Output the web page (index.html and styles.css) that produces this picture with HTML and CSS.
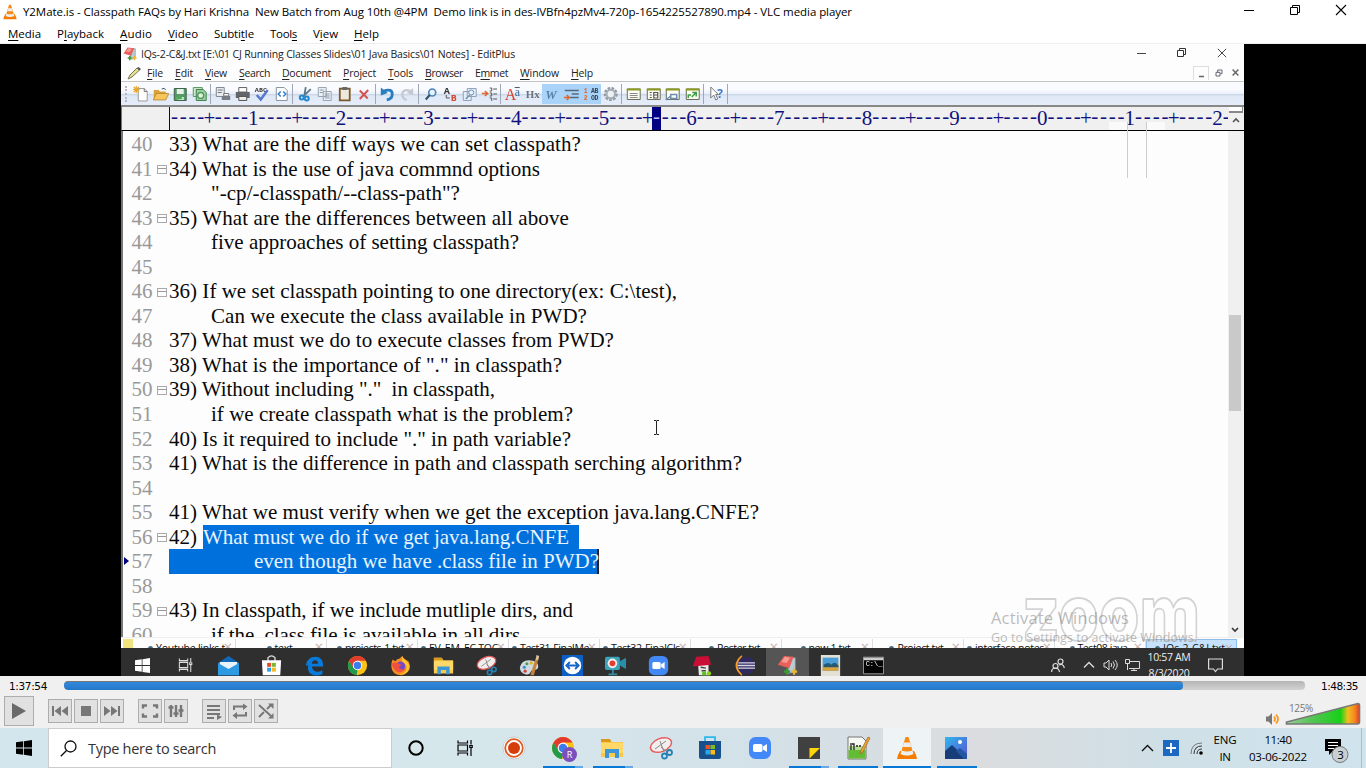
FILE: index.html
```html
<!DOCTYPE html>
<html lang="en">
<head>
<meta charset="utf-8">
<title>VLC media player</title>
<link rel="stylesheet" href="styles.css">
</head>
<body>
<svg class="defs" width="0" height="0">
  <defs>
    <linearGradient id="vol"><stop offset="0" stop-color="#9c9"/><stop offset=".35" stop-color="#55c455"/><stop offset=".74" stop-color="#18d018"/><stop offset=".84" stop-color="#f0c020"/><stop offset=".93" stop-color="#f58a20"/><stop offset="1" stop-color="#f03a1c"/></linearGradient>
    <linearGradient id="photo" x2="1" y2="1"><stop offset="0" stop-color="#30b8ee"/><stop offset="1" stop-color="#5b4fd0"/></linearGradient>
    <symbol id="cone" viewBox="0 0 24 24"><path d="M3 19l2-4h14l2 4 1 4H2z" fill="#f57c00"/><path d="M10.500 1h3l5 17q-6.500 3-13 0z" fill="#f78a12"/><path d="M9 6.500h6l1.300 4.500H7.700zM6.500 14.500q5.500 2 11 0l1 3.500q-6.500 3-13 0z" fill="#eceff1"/></symbol>
    <symbol id="chrome" viewBox="0 0 24 24"><circle cx="12" cy="12" r="11" fill="#fbc116"/><path d="M2.500 6.500A11 11 0 0 1 21.500 6.500H12L7 15z" fill="#e33b2e"/><path d="M2.500 6.500L7.500 15 12 17.500 11 23A11 11 0 0 1 2.500 6.500z" fill="#229a4b"/><circle cx="12" cy="12" r="5.400" fill="#fff"/><circle cx="12" cy="12" r="4.300" fill="#3b7ded"/></symbol>
    <symbol id="folder" viewBox="0 0 24 24"><path d="M1 3h9l2 3h11v15H1z" fill="#f8c94b"/><path d="M1 3h9l1 3H1z" fill="#d99a1c"/><path d="M1 7h22v10H1z" fill="#ffd868"/><path d="M5 22v-9h14v9h-4v-5H9v5z" fill="#3b97d8"/></symbol>
    <symbol id="snip" viewBox="0 0 24 24"><ellipse cx="12" cy="9" rx="11" ry="6.500" transform="rotate(-22 12 9)" fill="#f3eeee" stroke="#e55c5c" stroke-width="1.400"/><path d="M6 13L17 5M11 5l4 11M12 11l6 5" stroke="#888" fill="none"/><g fill="none" stroke="#2482b5" stroke-width="1.800"><circle cx="15.500" cy="20" r="2.500"/><circle cx="20.500" cy="16.500" r="2.500"/></g></symbol>
    <symbol id="zoomcam" viewBox="0 0 24 24"><rect x="1" y="1" width="22" height="22" rx="6.500" fill="#4388f7"/><rect x="5" y="8" width="9.500" height="8" rx="1.800" fill="#fff"/><path d="M15 10.500l4-2.500v8l-4-2.500z" fill="#fff"/></symbol>
    <symbol id="win" viewBox="0 0 16 16"><path d="M0 2.300L7.200 1.300v6.200H0zM8 1.200L16 0v7.500H8zM0 8.400h7.200v6.300L0 13.700zM8 8.400h8V16l-8-1.200z" fill="currentColor"/></symbol>
    <symbol id="taskview" viewBox="0 0 16 16"><path d="M1 .500V3h9.500V.500M1 15.500V13h9.500v2.500M1 5h9.500v6H1zM14 0v4.500M14 8v8M12.800 5.500h2.400v2h-2.400z" fill="none" stroke="currentColor" stroke-width="1.200"/></symbol>
    <symbol id="sheet" viewBox="0 0 16 16"><path d="M1.500 3h13v10.500h-13z" fill="#fdfdf4" stroke="#666b58"/><path d="M1 2.500h14v2H1z" fill="#8c9a1d"/></symbol>
    <symbol id="restore" viewBox="0 0 12 12"><path d="M1.500 3.500h7v7h-7zM3.500 3.500v-2h7v7h-2" fill="none" stroke="currentColor"/></symbol>
    <symbol id="close" viewBox="0 0 12 12"><path d="M1 1l10 10M11 1L1 11" stroke="currentColor" stroke-width="1.100"/></symbol>
    <symbol id="editplus" viewBox="0 0 24 24"><path d="M12 3l9 0v16l-8 2z" fill="#b9ccd4" stroke="#6d8790"/><path d="M8 1l11 1-5 13-13-4z" fill="#e8605a"/><path d="M9 2l6 1-4 6-6-1z" fill="#f79b94"/><path d="M8 19h7M11.500 15.500v7" stroke="#3c9a3a" stroke-width="2.600"/><path d="M16 19h7M19.500 15.500v7" stroke="#e8b93a" stroke-width="2.600"/></symbol>
  </defs>
</svg>

<header class="titlebar">
  <svg class="s16"><use href="#cone"/></svg>
  <span class="title" data-w="829">Y2Mate.is - Classpath FAQs by Hari Krishna&nbsp; New Batch from Aug 10th @4PM&nbsp; Demo link is in des-lVBfn4pzMv4-720p-1654225527890.mp4 - VLC media player</span>
  <span class="winbtns"><svg width="12" height="12"><path d="M1 6.500h10" stroke="#000"/></svg><svg class="s12"><use href="#restore"/></svg><svg class="s12"><use href="#close"/></svg></span>
</header>
<nav class="menubar">
  <span data-w="33"><u>M</u>edia</span><span data-w="47">P<u>l</u>ayback</span><span data-w="32"><u>A</u>udio</span><span data-w="30"><u>V</u>ideo</span><span data-w="40">Subti<u>t</u>le</span><span data-w="27">Tool<u>s</u></span><span data-w="25">V<u>i</u>ew</span><span data-w="25"><u>H</u>elp</span>
</nav>

<main class="video">
<div class="frame">
  <div class="ep-title">
    <svg class="s13"><use href="#editplus"/></svg>
    <span data-w="374">IQs-2-C&amp;J.txt [E:\01 CJ Running Classes Slides\01 Java Basics\01 Notes] - EditPlus</span>
    <span class="ep-win"><svg width="10" height="10"><path d="M0 5.500h9" stroke="#444"/></svg><svg width="10" height="10" viewBox="0 0 10 10"><path d="M.500 2.500h6v6h-6zM2.500 2.500v-2h6v6h-2" fill="none" stroke="#333"/></svg><svg width="10" height="10"><use href="#close"/></svg></span>
  </div>
  <div class="ep-menu">
    <svg width="14" height="14" viewBox="0 0 14 14"><path d="M1 13l2-4 7-7 2.500 2L5 11z" fill="#e8e08a" stroke="#77745a"/><path d="M10 2l1.500-1L14 3l-1.500 1.500z" fill="#555"/></svg>
    <span data-w="16"><u>F</u>ile</span><span data-w="18"><u>E</u>dit</span><span data-w="22"><u>V</u>iew</span><span data-w="31"><u>S</u>earch</span><span data-w="49"><u>D</u>ocument</span><span data-w="33"><u>P</u>roject</span><span data-w="25"><u>T</u>ools</span><span data-w="38"><u>B</u>rowser</span><span data-w="33">E<u>m</u>met</span><span data-w="39"><u>W</u>indow</span><span data-w="22"><u>H</u>elp</span>
    <span class="mdi"><svg width="16" height="14"><path d="M5 9.500h5" stroke="#666" stroke-width="1.500"/></svg><svg width="8" height="8" viewBox="0 0 12 12"><path d="M1.500 5h6v5.500h-6zM4 5V1.500h6.500V7H8" fill="none" stroke="#667" stroke-width="1.500"/></svg><svg width="7" height="7" viewBox="0 0 12 12"><path d="M1 1l10 10M11 1L1 11" stroke="#666" stroke-width="2.500"/></svg></span>
  </div>
  <div class="tools">
    <i class="grip"></i>
    <svg viewBox="0 0 16 16"><path d="M5.500 2.500h6l3 3v9.500h-9z" fill="#fff" stroke="#999"/><path d="M11.500 2.500v3h3" fill="none" stroke="#777"/><path d="M3.500 0v7M0 3.500h7M1 1l5 5M6 1L1 6" stroke="#e7a72c" stroke-width="1.200"/></svg>
    <svg viewBox="0 0 16 16"><path d="M1 4h5l1 1.500h6V13H1z" fill="#dba13a"/><path d="M3.500 7.500H16L13 14H.500z" fill="#f6c65c" stroke="#ad7b21" stroke-width=".7"/><path d="M9 3q3-2 4 1" fill="none" stroke="#456"/></svg>
    <svg viewBox="0 0 16 16"><path d="M2.500 2.500h12v12h-12z" fill="#58966a" stroke="#3a6248"/><path d="M5 3h7v5H5zM5 11h7v3H5z" fill="#e4f2e5"/><path d="M3 14l5-6 3 5z" fill="#4aab55"/></svg>
    <svg viewBox="0 0 16 16"><path d="M1.500 1.500h9v9h-9z" fill="#cce8cc" stroke="#589a68"/><path d="M4.500 3.500h7l3 3v8h-10z" fill="#9fd0a5" stroke="#40804c"/><circle cx="9" cy="9.500" r="3" fill="#dff2df" stroke="#4b9857" stroke-width="1.300"/></svg>
    <i class="sep"></i>
    <svg viewBox="0 0 16 16"><path d="M1.500 1.500h8v9h-8z" fill="#e9edf2" stroke="#7e8794"/><path d="M3 4h5M3 6.500h4" stroke="#777"/><path d="M7 10h8.500v4H7z" fill="#777d86"/><path d="M9 7.500h5V10H9z" fill="#fff" stroke="#777"/></svg>
    <svg viewBox="0 0 16 16"><path d="M4 1.500h8V6H4z" fill="#fff" stroke="#666"/><path d="M1 6h14v6H1z" fill="#62656b"/><path d="M4 10.500h8v4H4z" fill="#eee" stroke="#555"/></svg>
    <svg viewBox="0 0 16 16"><text x="1" y="6" class="t-abc">ABC</text><path d="M3 9l4 4.500L14 4" fill="none" stroke="#5577cc" stroke-width="2.500"/></svg>
    <svg viewBox="0 0 16 16"><path d="M2.500 1.500h8l3 3v10h-11z" fill="#fff" stroke="#8793a0"/><path d="M7 5.500L4.500 8 7 10.500M9.500 5.500L12 8l-2.500 2.500" fill="none" stroke="#387fd4" stroke-width="1.600"/></svg>
    <i class="sep"></i>
    <svg viewBox="0 0 16 16"><path d="M8 1L6.500 10M13 3L5 11" stroke="#5c7787" stroke-width="1.800"/><g fill="none" stroke="#2389ce" stroke-width="2"><circle cx="4" cy="11.500" r="2"/><circle cx="9" cy="12.500" r="2"/></g></svg>
    <svg viewBox="0 0 16 16"><path d="M1.500 1.500h8v9h-8zM6.500 5.500h8v9h-8z" fill="#edf2f7" stroke="#97a3b0"/><path d="M3 4h4M3 6.500h3M8 8h5M8 10h5M8 12h5" stroke="#8996a5"/></svg>
    <svg viewBox="0 0 16 16"><path d="M3 2.500h10v12H3z" fill="#efe9dc" stroke="#7a5a2a" stroke-width="1.800"/><path d="M5.500 1h5v3h-5z" fill="#666"/></svg>
    <svg viewBox="0 0 16 16"><path d="M4 4.500l8 8M12.500 4L4 13" stroke="#d35450" stroke-width="2"/></svg>
    <i class="sep"></i>
    <svg viewBox="0 0 16 16"><path d="M3 5.500q10-4 9.500 3.500-.5 4-5.500 5" fill="none" stroke="#287dbe" stroke-width="2.800"/><path d="M1 1.500v8l7-2.500z" fill="#287dbe"/></svg>
    <svg viewBox="0 0 16 16"><path d="M12.500 5.500q-9-4-9 3.500.5 4 4.500 5" fill="none" stroke="#c4c9d0" stroke-width="2.200"/><path d="M14.500 2v7L8 7z" fill="#c4c9d0"/></svg>
    <i class="sep"></i>
    <svg viewBox="0 0 16 16"><circle cx="9.500" cy="6.500" r="3.500" fill="#e8f3fd" stroke="#4f83bd" stroke-width="1.700"/><path d="M7 9l-4 4.500" stroke="#35536f" stroke-width="2.200"/></svg>
    <svg viewBox="0 0 16 16"><text x="1" y="8" class="t-a">A</text><text x="8" y="15" class="t-a t-red">B</text><path d="M3.500 9v3h3.500" fill="none" stroke="#555"/></svg>
    <svg viewBox="0 0 16 16"><path d="M5.500 2.500h9v8h-9zM1.500 5.500h8v9h-8z" fill="#e5edf6" stroke="#8fa0b5"/><circle cx="9.500" cy="6.500" r="2.500" fill="#e8f3fd" stroke="#6d91bc"/><path d="M8 9l-4 4" stroke="#6d91bc" stroke-width="1.500"/></svg>
    <svg viewBox="0 0 16 16"><path d="M0 7.500h5M3 5l3 2.500L3 10" fill="none" stroke="#e2652a" stroke-width="1.500"/><path d="M8 2h2v3H8M8 7h2v3H8M8 12h2v3M11.500 3H16M11.500 8H16M11.500 13H16" stroke="#555" fill="none"/></svg>
    <i class="sep"></i>
    <svg viewBox="0 0 16 16"><text x="0" y="14" class="t-serif t-red">A</text><text x="10" y="9.500" class="t-blue">a</text><path d="M10 1.500h5" stroke="#456"/></svg>
    <svg viewBox="0 0 16 16"><text x="1" y="12.500" class="t-hx">Hx</text></svg>
    <svg class="on" viewBox="0 0 16 16"><text x="1.500" y="13" class="t-w">W</text></svg>
    <svg class="on" viewBox="0 0 16 16"><path d="M1 4.500h14M8 8h7M6 11.500h9" stroke="#566777" stroke-width="1.500"/><path d="M0 11.500h5M3 9l2.500 2.500L3 14" fill="none" stroke="#e2652a" stroke-width="1.500"/></svg>
    <svg class="on" viewBox="0 0 16 16"><text x="1" y="7" class="t-num"><tspan fill="#e06522">1</tspan> AB</text><text x="1" y="14" class="t-num"><tspan fill="#e06522">2</tspan> OD</text></svg>
    <svg viewBox="0 0 16 16"><circle cx="8" cy="8" r="5.500" fill="none" stroke="#9199a2" stroke-width="3" stroke-dasharray="2.500 1.200"/><circle cx="8" cy="8" r="4.200" fill="#edf0f4" stroke="#a6adb5" stroke-width="2"/></svg>
    <i class="sep"></i>
    <svg viewBox="0 0 16 16"><use href="#sheet"/><path d="M4 7.500h8M4 9.500h8M4 11.500h8" stroke="#888"/></svg>
    <svg viewBox="0 0 16 16"><use href="#sheet"/><path d="M4 6.500h2M4 9h2M4 11.500h2M8 6.500h4v5.500H8zM8 9h4" fill="none" stroke="#555" stroke-width="1.200"/></svg>
    <svg viewBox="0 0 16 16"><use href="#sheet"/><path d="M1 14l5-4M6 8.500h6v4H6z" fill="none" stroke="#6d8db5" stroke-width="1.500"/></svg>
    <svg viewBox="0 0 16 16"><use href="#sheet"/><path d="M3.500 12V9h3M7 11l4-4M7.500 6.500h4v4" fill="none" stroke="#3c9e43" stroke-width="1.500"/></svg>
    <i class="sep"></i>
    <svg viewBox="0 0 16 16"><path d="M2 1v11l3-3 2 5 2-1-2-4.500h2.500z" fill="#fff" stroke="#777"/><text x="8.500" y="12.500" class="t-q">?</text></svg>
    <i class="sep"></i>
  </div>
  <div class="ruler"><div class="ruler-gap"></div><div class="cells" id="cells"></div><div class="ruler-end"><i></i><svg width="8" height="6"><path d="M1 5l3-3 3 3" fill="none" stroke="#555" stroke-width="1.600"/></svg></div></div>
  <div class="editor">
    <div class="lines">
      <div class="ln"><b>40</b><i></i><span data-w="412">33) What are the diff ways we can set classpath?</span></div>
      <div class="ln"><b>41</b><i class="fold"></i><span data-w="371">34) What is the use of java commnd options</span></div>
      <div class="ln in"><b>42</b><i></i><span data-w="249">"-cp/-classpath/--class-path"?</span></div>
      <div class="ln"><b>43</b><i class="fold"></i><span data-w="400">35) What are the differences between all above</span></div>
      <div class="ln in"><b>44</b><i></i><span data-w="308">five approaches of setting classpath?</span></div>
      <div class="ln"><b>45</b></div>
      <div class="ln"><b>46</b><i class="fold"></i><span data-w="508">36) If we set classpath pointing to one directory(ex: C:\test),</span></div>
      <div class="ln in"><b>47</b><i></i><span data-w="376">Can we execute the class available in PWD?</span></div>
      <div class="ln"><b>48</b><i></i><span data-w="445">37) What must we do to execute classes from PWD?</span></div>
      <div class="ln"><b>49</b><i></i><span data-w="393">38) What is the importance of "." in classpath?</span></div>
      <div class="ln"><b>50</b><i class="fold"></i><span data-w="326">39) Without including "."&nbsp; in classpath,</span></div>
      <div class="ln in"><b>51</b><i></i><span data-w="362">if we create classpath what is the problem?</span></div>
      <div class="ln"><b>52</b><i></i><span data-w="402">40) Is it required to include "." in path variable?</span></div>
      <div class="ln"><b>53</b><i></i><span data-w="573">41) What is the difference in path and classpath serching algorithm?</span></div>
      <div class="ln"><b>54</b></div>
      <div class="ln"><b>55</b><i></i><span data-w="590">41) What we must verify when we get the exception java.lang.CNFE?</span></div>
      <div class="ln"><b>56</b><i class="fold"></i><span class="pre" data-w="28">42)</span><span class="sel s1"><span data-w="366">What must we do if we get java.lang.CNFE</span></span></div>
      <div class="ln now"><b>57</b><i></i><span class="sel s2"><span data-w="345">even though we have .class file in PWD?</span></span></div>
      <div class="ln"><b>58</b></div>
      <div class="ln"><b>59</b><i class="fold"></i><span data-w="404">43) In classpath, if we include mutliple dirs, and</span></div>
      <div class="ln in"><b>60</b><i></i><span data-w="309">if the .class file is available in all dirs</span></div>
    </div>
    <div class="scroll"><div class="thumb"></div><svg width="8" height="6"><path d="M1 1l3 3 3-3" fill="none" stroke="#333" stroke-width="1.600"/></svg></div>
  </div>
  <div class="tabs">
    <i class="tabnew"></i>
    <span><em></em><b data-w="69">Youtube links t</b><s>×</s></span><span><em></em><b data-w="18">text</b><s>×</s></span><span><em></em><b data-w="59">projects-1.txt</b><s>×</s></span><span><em></em><b data-w="69">EV_EM_EC TOC</b><s>×</s></span><span><em></em><b data-w="69">Test31-FinalMe</b><s>×</s></span><span><em></em><b data-w="69">Test32-FinalCls</b><s>×</s></span><span><em></em><b data-w="43">Poster.txt</b><s>×</s></span><span><em></em><b data-w="42">new 1.txt</b><s>×</s></span><span><em></em><b data-w="46">Project.txt</b><s>×</s></span><span><em></em><b data-w="69">interface notes</b><s>×</s></span><span><em></em><b data-w="50">Test08.java</b><s>×</s></span><span class="cur"><em></em><b data-w="62">IQs-2-C&amp;J.txt</b><s>×</s></span>
  </div>
  <div class="innerbar">
    <div class="slot"><svg width="15" height="15" color="#fff"><use href="#win"/></svg></div>
    <div class="slot"><svg width="15" height="14" color="#ddd"><use href="#taskview"/></svg></div>
    <div class="slot"><svg viewBox="0 0 24 24"><path d="M0 9L12 1l12 8v14H0z" fill="#1168b8"/><path d="M2 8h20v8H2z" fill="#e9f4fc"/><path d="M0 9l12 7 12-7v14H0z" fill="#2d9ae2"/></svg></div>
    <div class="slot"><svg viewBox="0 0 24 24"><path d="M8 7V3q4-4 8 0v4" fill="none" stroke="#ddd" stroke-width="1.500"/><path d="M1 6h22l-1 17H2z" fill="#fff"/><path d="M7 9h4.500v4.500H7z" fill="#ea4b2a"/><path d="M12.500 9H17v4.500h-4.500z" fill="#7cb82f"/><path d="M7 14.500h4.500V19H7z" fill="#2a9fe5"/><path d="M12.500 14.500H17V19h-4.500z" fill="#f7b71d"/></svg></div>
    <div class="slot"><svg viewBox="0 0 24 24"><path d="M2 12Q4 2 13 2q9 0 9 11H9q1 6 7 6 3 0 5-1.500V22q-10 3.500-15-2-3-5 0-11 1 1-1 3zM9 10h7q0-4-3.500-4Q9.500 6 9 10z" fill="#087ada"/></svg></div>
    <div class="slot"><svg><use href="#chrome"/></svg></div>
    <div class="slot"><svg viewBox="0 0 24 24"><path d="M3 5l3 2q2-3 5-3l3-3q1 3 5 5l2 1q3 5 1 10-4 6-10 6-10-1-10.500-10Q1.500 8 3 5z" fill="#f88c22"/><path d="M14 1q1 4 5 6 5 5 1 12-5 4-9 3 7-1 8-7 0-5-5-7z" fill="#fdca2c"/><circle cx="12" cy="13" r="5.500" fill="#7b48c4"/><path d="M2 10q4-3 8 0l3 1-3 3q3 4 7 2-3 5-9 3-5-3-6-9z" fill="#f0523f"/></svg></div>
    <div class="slot"><svg><use href="#folder"/></svg></div>
    <div class="slot"><svg><use href="#snip"/></svg></div>
    <div class="slot"><svg viewBox="0 0 24 24"><path d="M1 14Q3 6 11 6q11 0 11 7 0 4-6 4-2 0-3 3t-6 2q-6-2-6-8z" fill="#cfdae0"/><circle cx="6" cy="14" r="1.800" fill="#3a8ed0"/><circle cx="9" cy="10" r="1.800" fill="#49a04a"/><circle cx="14" cy="9" r="1.800" fill="#ddb421"/><circle cx="7" cy="18.500" r="1.800" fill="#cc4439"/><path d="M13 23L19 4l3 1-5 18z" fill="#c98238"/><path d="M19 5l1-5 3 1-1 5z" fill="#ddc39b"/></svg></div>
    <div class="slot"><svg viewBox="0 0 24 24"><path d="M0 0h24v24H0z" fill="#0c5fc4"/><circle cx="12" cy="12" r="10" fill="#fff"/><path d="M7 12h10M9 8l-4 4 4 4M15 8l4 4-4 4" fill="none" stroke="#1565c8" stroke-width="2.200"/></svg></div>
    <div class="slot"><svg viewBox="0 0 24 24"><rect x="0" y="2" width="17" height="15" rx="2" fill="#3ba2ba"/><path d="M17 7l7-4v13l-7-4z" fill="#278faa"/><circle cx="8.500" cy="9.500" r="5.500" fill="#f4eeee"/><circle cx="8.500" cy="9.500" r="3.300" fill="#e33c33"/><path d="M9 17v4M4 22h10" stroke="#338da0" stroke-width="2"/></svg></div>
    <div class="slot"><svg><use href="#zoomcam"/></svg></div>
    <div class="slot"><svg viewBox="0 0 24 24"><path d="M8 9h12v14H9z" fill="#ece8e8"/><path d="M6 2l14-1 3 10-21 2z" fill="#c90f36"/><path d="M11 14l6 1M12 18h5" stroke="#444" stroke-width="1.500"/><circle cx="15" cy="21" r="2.500" fill="#55c51a"/><circle cx="20.500" cy="21" r="2.500" fill="#8fd019"/></svg></div>
    <div class="slot"><svg viewBox="0 0 24 24"><path d="M9 1Q-4 12 9 23-1 12 9 1z" fill="#f39a28" stroke="#f39a28" stroke-width="1.500"/><circle cx="14" cy="12" r="10" fill="#30295e"/><path d="M5 9h19M4 12h20M5 15h19" stroke="#d6d5e5" stroke-width="1.700"/></svg></div>
    <div class="slot active"><svg><use href="#editplus"/></svg></div>
    <div class="slot"><svg viewBox="0 0 24 24"><path d="M1 0h22v24H1z" fill="#e3e0d6"/><path d="M3 3h18v15H3z" fill="#4b9fd8"/><path d="M3 13q6-6 10-1l8-2v8H3z" fill="#dda33b"/><path d="M4 11q6-4 9 0 4-5 8 1v2H4z" fill="#245a73"/></svg></div>
    <div class="slot"><svg viewBox="0 0 24 24"><path d="M.500 2.500h23v19H.500z" fill="#050505" stroke="#aaa"/><path d="M1 3h22v3H1z" fill="#ccc"/><text x="3" y="13" class="t-cmd">C:\_</text></svg></div>
    <div class="inner-tray">
      <svg class="people" width="14" height="15" viewBox="0 0 14 15"><g fill="none" stroke="#ddd" stroke-width="1.200"><circle cx="9.500" cy="3.500" r="2.500"/><circle cx="4.500" cy="8" r="2.500"/><path d="M.600 14q0-4 4-4 3 0 4 4M8 7q4-2 5.400 3"/></g></svg>
      <svg class="up" width="12" height="8"><path d="M1 6.500L6 1.500l5 5" fill="none" stroke="#ddd" stroke-width="1.300"/></svg>
      <svg class="spk" width="15" height="12" viewBox="0 0 15 12"><path d="M1 4h2l3-3v10L3 8H1zM8 4q1.500 2 0 4M10 2.500q3 3.500 0 7M12 1q4.500 5 0 10" fill="none" stroke="#ddd"/></svg>
      <svg class="mon" width="15" height="12" viewBox="0 0 15 12"><path d="M4 2.500h10.500v7H4M9 9.500V12M6 11.500h6M.500.500h4v4h-4zM2.500 4.500V11" fill="none" stroke="#ddd"/></svg>
      <div class="inner-clock"><span data-w="43">10:57 AM</span><span data-w="41">8/3/2020</span></div>
      <svg class="note" width="15" height="15" viewBox="0 0 15 15"><path d="M.600 1h13.800v10H9.500L7.500 13.500 5.500 11H.600z" fill="none" stroke="#ddd" stroke-width="1.200"/></svg>
    </div>
  </div>

  <svg class="zoommark" width="190" height="56"><text x="5" y="47" textLength="178" lengthAdjust="spacingAndGlyphs">zoom</text></svg>
  <div class="activate"><span data-w="138">Activate Windows</span><small data-w="206">Go to Settings to activate Windows.</small></div>
  <div class="ghost"></div>
  <svg class="ibeam" width="7" height="15"><path d="M1 .500h2l.5.500.5-.5h2M3.500 1v13M1 14.500h2l.5-.5.5.5h2" fill="none" stroke="#222"/></svg>
</div>
</main>

<section class="player">
  <div class="seekrow"><span data-w="38">1:37:54</span><div class="seek"><div class="played"></div></div><span data-w="37">1:48:35</span></div>
  <div class="btnrow">
    <button class="big"><svg width="16" height="18"><path d="M1 1l14 8L1 17z" fill="#6a6a6a"/></svg></button>
    <div class="grp">
      <button><svg viewBox="0 0 18 18"><path d="M1 4h2v10H1zM10 4v10L3.500 9zM17 4v10l-6.500-5z"/></svg></button><button><svg viewBox="0 0 18 18"><path d="M4 4h10v10H4z"/></svg></button><button><svg viewBox="0 0 18 18"><path d="M15 4h2v10h-2zM8 4v10l6.500-5zM1 4v10l6.500-5z"/></svg></button>
    </div>
    <div class="grp">
      <button><svg viewBox="0 0 18 18"><path d="M2 6.500V3.500h4M12 3.500h4v3M16 11.500v3h-4M6 14.500H2v-3" class="k"/></svg></button><button><svg viewBox="0 0 18 18"><path d="M4 3v12M9 3v12M14 3v12" class="k"/><path d="M1.500 5.500h5M6.500 11.500h5M11.500 8.500h5" class="k"/></svg></button>
    </div>
    <div class="grp">
      <button><svg viewBox="0 0 18 18"><path d="M2 4h13M2 8h13M2 12h13M2 16h7" class="k thin"/><path d="M12 12.500l5 2.500-5 3z"/></svg></button><button><svg viewBox="0 0 18 18"><path d="M3 8V4.500h10M15 10v3.500H5" class="k thin"/><path d="M12 1.500l4.500 3L12 8zM6 10l-4.500 3.500L6 17z"/></svg></button><button><svg viewBox="0 0 18 18"><path d="M2 3l12 11M2 15l5-5M10 7l4-4" class="k thin"/><path d="M11 1.500h5.500V7zM11 16.500h5.500V11z"/></svg></button>
    </div>
    <div class="volume">
      <svg width="14" height="14" viewBox="0 0 14 14"><path d="M0 4.500h2.500L6 1v12L2.500 9.500H0z" fill="#777"/><path d="M8 4.500q2 2.500 0 5M10 2.500q4 4.500 0 9" fill="none" stroke="#f89a26" stroke-width="1.800"/></svg>
      <span data-w="24">125%</span>
      <svg class="wedge" width="76" height="24"><path d="M1.500 22v-2L73 1.500q1.500 0 1.500 2V20q0 2-2 2z" fill="url(#vol)" stroke="#777" stroke-width="1.600"/></svg>
    </div>
  </div>
</section>

<footer class="taskbar">
  <div class="start"><svg width="16" height="16"><use href="#win"/></svg></div>
  <div class="search"><svg width="17" height="17" viewBox="0 0 17 17"><circle cx="10.500" cy="6.500" r="5.500" fill="none" stroke="#111" stroke-width="1.300"/><path d="M6.500 10.500L.800 16.300" stroke="#111" stroke-width="1.300"/></svg><span data-w="128">Type here to search</span></div>
  <div class="apps">
    <div><svg class="s16" viewBox="0 0 16 16"><circle cx="8" cy="8" r="6.700" fill="none" stroke="#000" stroke-width="2"/></svg></div>
    <div><svg class="s16"><use href="#taskview"/></svg></div>
    <div><svg viewBox="0 0 24 24"><circle cx="12" cy="12" r="11" fill="#fff" stroke="#bbb" stroke-width=".7"/><circle cx="12" cy="12" r="8.800" fill="none" stroke="#dc5c24" stroke-width="1.800"/><circle cx="12" cy="12" r="6" fill="#d53e0a"/></svg></div>
    <div class="run two"><svg viewBox="0 0 24 24"><use href="#chrome" width="24" height="24"/><circle cx="18.500" cy="18.500" r="7.500" fill="#7b50bd"/><text x="15.800" y="22" class="t-r">R</text></svg></div>
    <div class="run two"><svg><use href="#folder"/></svg></div>
    <div><svg><use href="#snip"/></svg></div>
    <div><svg viewBox="0 0 24 24"><path d="M7 6V1.200h10V6" fill="none" stroke="#2bb9ec" stroke-width="1.800"/><path d="M1 5h22v16q0 2-2 2H3q-2 0-2-2z" fill="#17508b"/><path d="M7.500 9H12v4H7.500z" fill="#f15125"/><path d="M12.500 9H17v4h-4.500z" fill="#80bc1f"/><path d="M7.500 14H12v4.500H7.500z" fill="#25a8eb"/><path d="M12.500 14H17v4.500h-4.500z" fill="#febc18"/></svg></div>
    <div><svg><use href="#zoomcam"/></svg></div>
    <div class="run two"><svg viewBox="0 0 24 24"><path d="M1 1h22v22H1z" fill="#404040"/><path d="M12.500 12h10.500L12.500 22.500z" fill="#ffd60a"/></svg></div>
    <div class="run"><svg viewBox="0 0 24 24"><path d="M2 1h14l4 4v18H2z" fill="#f6f8f2" stroke="#777"/><path d="M2.500 14h17v8.500h-17z" fill="#62bd32"/><path d="M2.500 10h17v4h-17z" fill="#b4df94"/><path d="M5 7v7M6 8h2v6M10 10h2M13 10h2" stroke="#222" stroke-width="1.300" fill="none"/><path d="M14 18l1-4 7-13 2 1-7 14z" fill="#eca231" stroke="#8d5c27" stroke-width=".6"/></svg></div>
    <div class="run full"><svg><use href="#cone"/></svg></div>
    <div class="run"><svg viewBox="0 0 24 24"><path d="M1 1h22v22H1z" fill="url(#photo)"/><path d="M1 15l7-6 15 14H1z" fill="#173e78"/><path d="M12 15l4-3 7 6v5h-3z" fill="#2357a2"/><circle cx="16" cy="6" r="2" fill="#fff"/></svg></div>
  </div>
  <div class="tray">
    <svg class="t1" width="13" height="8"><path d="M1 7l5.500-5.500L12 7" fill="none" stroke="#111" stroke-width="1.400"/></svg>
    <svg class="t2" width="16" height="16"><path d="M0 0h16v16H0z" fill="#1c69c3"/><path d="M8 3v10M3 8h10" stroke="#fff" stroke-width="1.800"/></svg>
    <svg class="t3" width="13" height="13" viewBox="0 0 13 13"><g fill="none" stroke="#777"><path d="M1 12Q1 1 12 1"/><path d="M4 12q0-8 8-8M7 12q0-5 5-5" stroke="#333"/></g><circle cx="11" cy="11" r="1.800"/></svg>
    <div class="lang"><span data-w="23">ENG</span><span data-w="11">IN</span></div>
    <div class="clock"><span data-w="27">11:40</span><span data-w="58">03-06-2022</span></div>
    <svg class="t4" width="25" height="25" viewBox="0 0 25 25"><path d="M1 1h16v12H9l-4 4v-4H1z" fill="#000"/><path d="M4 4.500h10M4 7.500h10M4 10.500h6" stroke="#fff"/><circle cx="16" cy="16.500" r="8" fill="#c9d0d4" stroke="#777"/><text x="13.200" y="20.700" class="t-3">3</text></svg>
  </div>
</footer>
<script src="script.js"></script>
</body>
</html>
```

FILE: styles.css
```css
* { box-sizing: border-box; }
body { margin: 0; width: 1366px; height: 768px; overflow: hidden; background: #fff; color: #000; font: 12px "Open Sans", "Noto Sans", sans-serif; display: flex; flex-direction: column; }
svg { display: block; flex: none; }
.defs { position: absolute; }
[data-w] { display: inline-block; white-space: pre; flex: none; }
.s16 { width: 16px; height: 16px; }
.s13 { width: 14px; height: 14px; }
.s12 { width: 12px; height: 12px; }
u { text-underline-offset: 2px; }

.titlebar { height: 24px; flex: none; display: flex; align-items: center; padding-left: 2px; gap: 5px; font-size: 11.5px; }
.title { margin-top: -1px; }
.winbtns { margin-left: auto; display: flex; gap: 34px; padding: 0 19px 4px 0; }
.menubar { height: 20px; flex: none; display: flex; align-items: center; gap: 16px; padding-left: 8px; border-bottom: 1px solid #eee; font-size: 11.5px; }

.video { height: 632px; flex: none; background: #000; padding: 0 122px 0 121px; }
.frame { position: relative; height: 632px; width: 1123px; background: #fdfdfd; overflow: hidden; display: flex; flex-direction: column; }
.ep-title { height: 20px; flex: none; display: flex; align-items: center; gap: 4px; padding-left: 2px; font-size: 10.500px; color: #222; }
.ep-win { margin-left: auto; display: flex; gap: 30px; padding: 0 17px 2px 0; color: #333; }
.ep-menu { height: 18px; flex: none; display: flex; align-items: center; gap: 12px; padding-left: 6px; font-size: 10.500px; color: #222; border-bottom: 1px solid #c4c4c4; }
.ep-menu > svg { margin-right: -6px; }
.mdi { margin-left: auto; display: flex; align-items: center; gap: 9px; padding-right: 5px; }
.mdi svg:first-child { border: 1px solid #ddd; border-bottom: 0; margin-right: -3px; }
.tools { height: 23px; flex: none; display: flex; align-items: center; background: linear-gradient(#fafbfe 0 30%, #eaf0fa 52%, #ccd7e8 54%, #dfe8f6 62%, #e6edf9); }
.tools svg { width: 19.500px; height: 20px; padding: 2px 1.800px; filter: blur(.4px); }
.tools .on { background: #a9d3f8; }
.grip { width: 10.300px; height: 16px; border-left: 2px dotted #b5b8c0; margin-left: 4px; margin-right: -4px; }
.sep { width: 4.200px; height: 20px; background: linear-gradient(90deg, transparent 1.500px, #a0a8b5 1.500px 2.500px, transparent 2.500px); }
.t-abc { font: bold 6px "Open Sans", sans-serif; fill: #333; }
.t-a { font: bold 9px "Open Sans", sans-serif; fill: #333; }
.t-serif { font: 16px "Liberation Serif", serif; }
.t-a.t-red, .t-red { fill: #d8472f; }
.t-blue { font: 12px "Liberation Serif", serif; fill: #356a9a; }
.t-hx { font: bold 11px "Liberation Serif", serif; fill: #6a727d; }
.t-w { font: italic bold 13px "Liberation Serif", serif; fill: #5a82a8; }
.t-num { font: bold 6.500px "Liberation Mono", monospace; letter-spacing: -.3px; fill: #345; }
.t-q { font: bold 12px "Open Sans", sans-serif; fill: #3f78d0; }

.ruler { height: 26px; flex: none; display: flex; background: #f0f0f0; border-top: 2px solid #888; border-bottom: 1px solid #000; border-left: 1px solid #777; }
.ruler-gap { width: 48px; flex: none; border-right: 1px solid #000080; }
.cells { width: 1058px; flex: none; display: flex; overflow: hidden; font: 21px/22px "Liberation Serif", serif; color: #10107e; }
.cells span { width: 8.780px; flex: none; display: flex; justify-content: center; }
.cells .dash { line-height: 19px; }
.cells .mark { background: #000080; color: #b9b9ff; line-height: 19px; }
.ruler-end { flex: 1; display: flex; flex-direction: column; align-items: center; gap: 4px; }
.ruler-end i { width: 14px; height: 6px; border: solid #888; border-width: 0 1px 2px 0; background: #fff; }

.editor { height: 506px; flex: none; display: flex; border-left: 2px solid #777; background: #fdfdfd; }
.lines { flex: 1; padding-top: 1px; overflow: hidden; font: 21px/24.560px "Liberation Serif", serif; color: #090909; }
.ln { height: 24.560px; display: flex; position: relative; white-space: pre; line-height: 24.600px; }
.ln > b { width: 29.500px; flex: none; text-align: right; font-weight: normal; color: #999; }
.ln > i { width: 16.500px; flex: none; display: flex; }
.ln.in > i { width: 58.500px; }
.fold::before { content: ""; width: 8px; height: 7px; margin: 8.500px 0 0 4.500px; border: 1px solid #aaa; background: linear-gradient(transparent 2px, #999 2px 3px, transparent 3px); }
.pre { margin-right: 6px; }
.sel { background: #0071dc; color: #e8f4ff; height: 25px; }
.s1 { width: 376px; }
.s2 { width: 430px; padding-left: 85px; border-right: 2px solid #222; }
.now::before { content: ""; position: absolute; left: 1px; top: 7.500px; border: solid transparent; border-width: 4.500px 0 4.500px 5px; border-left-color: #000080; }
.scroll { width: 16px; background: #f0f0f0; display: flex; flex-direction: column; align-items: center; justify-content: space-between; padding: 184px 2px 4px 0; }
.thumb { width: 12px; height: 96px; background: #c9c9c9; }

.tabs { height: 11px; flex: none; display: flex; overflow: hidden; padding-top: 1px; border-top: 1px solid #eee; background: #fdfdfd; }
.tabnew { width: 10px; height: 11px; margin: 0 12px 0 2px; background: #f1e47e; flex: none; }
.tabs span { width: 91px; height: 22px; flex: none; display: flex; justify-content: center; gap: 3px; padding: 2px 3px 0 0; border-right: 1px solid #ddd; position: relative; font-size: 10.500px; line-height: 15px; }
.tabs b { font-weight: normal; color: #111; }
.tabs em { width: 5px; height: 5px; margin-top: 5px; border-radius: 50%; background: #467; flex: none; }
.tabs span b[data-w="69"] { margin-right: 4px; }
.tabs s { position: absolute; right: 3px; top: 0; font-size: 15px; color: #c3adad; text-decoration: none; }
.tabs .cur { background: #c5e1fb; border: 1px solid #8ebce8; padding-top: 1px; }

.innerbar { height: 28px; flex: none; display: flex; background: #2f2f30; overflow: hidden; }
.slot { width: 43px; flex: none; height: 34px; display: flex; align-items: center; justify-content: center; }
.slot svg:not([width]) { width: 21px; height: 21px; filter: blur(.3px); }
.slot.active { background: #555; }
.t-cmd { font: 8px "Liberation Mono", monospace; fill: #fff; }
.inner-tray { flex: 1; display: flex; height: 34px; align-items: center; color: #ddd; }
.people { margin-left: 156px; }
.up { margin-left: 18px; }
.spk { margin-left: 8px; }
.mon { margin-left: 7px; }
.inner-clock { margin-left: 7px; width: 44px; display: flex; flex-direction: column; align-items: center; font-size: 10.500px; line-height: 16px; color: #eee; }
.note { margin-left: 17px; }

.zoommark { position: absolute; left: 896px; top: 549px; overflow: visible; opacity: .8; }
.zoommark text { font: 800 76px Inter, sans-serif; fill: rgba(255,255,255,.55); stroke: #c9c9c9; stroke-width: 1.800px; stroke-linejoin: round; }
.activate { position: absolute; left: 870px; top: 563px; width: 240px; height: 41px; display: flex; flex-direction: column; align-items: flex-start; color: rgba(120,120,120,.5); font-size: 16.500px; line-height: 22px; }
.activate small { font-size: 12.500px; line-height: 18px; }
.ghost { position: absolute; left: 988px; top: 78px; width: 56px; height: 56px; background: linear-gradient(90deg, #fafafa 18px, #ccc 18px 19px, #fff0 19px 37px, #ccc 37px 38px, #fafafa 38px) 0 0 / 100% 8px no-repeat, linear-gradient(90deg, transparent 18px, #ccc 18px 19px, transparent 19px 37px, #ccc 37px 38px, transparent 38px); }
.ibeam { position: absolute; left: 532px; top: 376px; }

.player { height: 52px; flex: none; background: #f0f0f0; }
.seekrow { height: 20px; display: flex; align-items: center; padding-left: 9px; font: 10.500px "DejaVu Sans", sans-serif; }
.seek { width: 1241px; height: 9px; margin: 0 16px 1px 17px; border-radius: 4px; background: linear-gradient(#b5b5b5, #d2d2d2); overflow: hidden; }
.played { width: 1119px; height: 9px; border-radius: 4px; background: linear-gradient(#3088dc, #2578c8); border-top: 1px solid #777; }
.btnrow { height: 30px; display: flex; align-items: center; gap: 14px; padding-left: 4px; }
.grp { display: flex; gap: 2px; }
.player button { width: 24px; height: 24px; padding: 0; border: 1px solid #adadad; background: #e1e1e1; display: flex; align-items: center; justify-content: center; fill: #777; }
.player button svg:not([width]) { width: 18px; height: 18px; }
.player .big { width: 30px; height: 30px; }
.k { fill: none; stroke: #777; stroke-width: 2.400px; }
.thin { stroke-width: 2px; }
.volume { margin-left: auto; display: flex; align-items: flex-end; padding-right: 5px; height: 30px; }
.volume > svg { margin-bottom: 0; }
.volume > svg:first-child { margin: 0 9px 0 0; }
.volume > span { margin-bottom: 11px; margin-right: -28px; font-size: 10px; line-height: 14px; color: #777; position: relative; }

.taskbar { height: 40px; flex: none; display: flex; background: linear-gradient(90deg, #d3e5ed, #d6e7ec 35%, #d3e1e8 55%, #dadcde 72%, #cfdfe6 85%, #d0e4ee); }
.start { width: 48px; display: flex; align-items: center; justify-content: center; }
.search { width: 344px; height: 40px; background: #fff; border: 1px solid #ccc; display: flex; align-items: center; gap: 11px; padding-left: 11px; font-size: 14.500px; color: #333; }
.apps { display: flex; margin-left: -1px; }
.apps div { width: 49.150px; display: flex; align-items: center; justify-content: center; position: relative; }
.apps svg:not(.s16) { width: 24px; height: 24px; overflow: visible; }
.run::after { content: ""; position: absolute; bottom: 0; left: 5px; width: 40px; height: 2px; background: #0878d7; }
.two::after { background: linear-gradient(90deg, #0878d7 32px, #64a8e6 32px); }
.apps .full { background: linear-gradient(90deg, transparent 1px, #eef3f6 1px 49px, transparent 49px); }
.full::after { width: 48px; left: 1px; }
.t-r { font: 9px "Open Sans", sans-serif; fill: #fff; }
.tray { margin-left: auto; display: flex; align-items: center; width: 226px; border-right: 1px solid #b0bdc4; margin-right: 4px; }
.t1 { margin-left: 5px; }
.t2 { margin-left: 9px; }
.t3 { margin-left: 11px; }
.lang, .clock { display: flex; flex-direction: column; align-items: center; line-height: 17px; font-size: 11.500px; }
.lang { width: 26px; margin-left: 9px; }
.clock { width: 60px; margin-left: 10px; }
.t4 { margin-left: 16px; margin-top: 5px; }
.t-3 { font: 11.500px "Open Sans", sans-serif; }
```

FILE: script.js
```js
// Column ruler: one cell per character column
const cells = document.getElementById('cells');
for (let k = 1; k <= 121; k++) {
  const cell = document.createElement('span');
  cell.textContent = k % 10 === 0 ? String((k / 10) % 10) : k % 5 === 0 ? '+' : '-';
  if (cell.textContent === '-') cell.className = 'dash';
  if (k === 56) cell.className = 'mark';
  cells.appendChild(cell);
}

// Space each label's letters so it fills its declared width
document.querySelectorAll('[data-w]').forEach((el) => {
  const target = Number(el.dataset.w);
  const natural = el.getBoundingClientRect().width;
  const spacing = (target - natural) / el.textContent.length;
  el.style.letterSpacing = spacing.toFixed(3) + 'px';
});
```
